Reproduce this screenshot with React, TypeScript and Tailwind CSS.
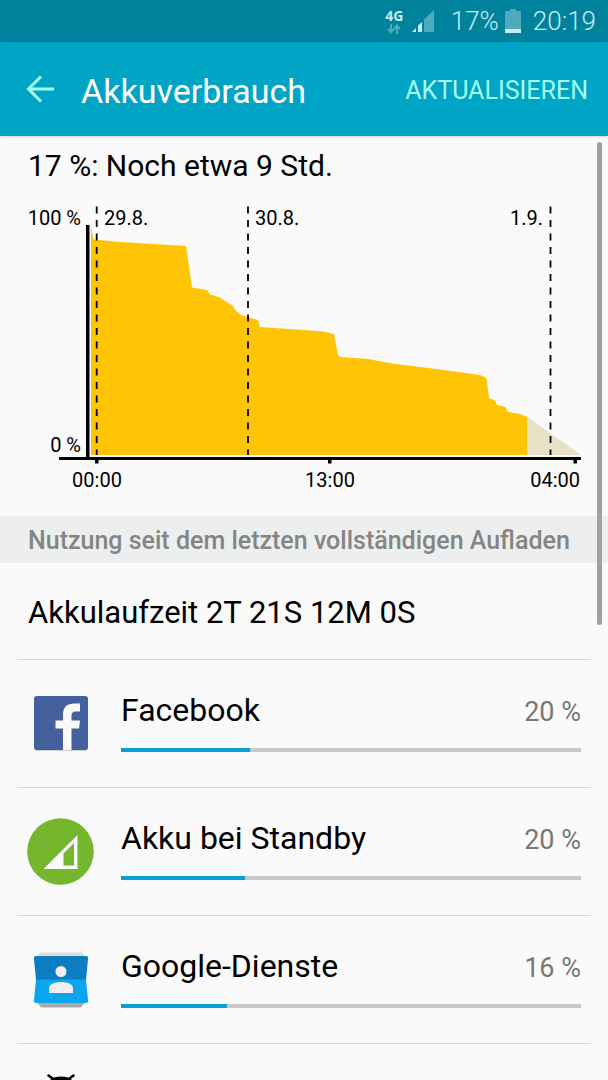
import type { ReactNode } from "react";

const dischargePath =
  "M91 227 L93.5 239.5 L100 240 L120 242 L186 246 L192 287.5 L207 290 L210 294.5 L220 297.5 L225 301 L233 306 L236 311 L242 315.5 L248 317 L258 320 L260 327 L304 330 L324 331.5 L334 334 L337 350 L338 355 L341 357 L368 359 L392 363.5 L440 369.5 L480 375 L486.5 378 L489 398 L495 400.5 L497 405 L505.5 407 L508 412 L520 414 L527.5 417 V455 H91 Z";

const FacebookIcon = () => (
  <svg width="56" height="58" viewBox="0 0 56 58" aria-hidden="true">
    <rect x="1" y="2" width="54" height="54" rx="3" fill="#d0d0d0" />
    <rect x="1" y="1" width="54" height="54" rx="3" fill="#44619d" />
    <path
      d="M30 55 V33.5 H22.5 V25.5 H30 V20 C30 12 34 8.5 41.5 8.5 H47 V16.5 H43 C39.5 16.5 38.5 18 38.5 21 V25.5 H47 L46 33.5 H38.5 V55 Z"
      fill="#fafafa"
    />
  </svg>
);

const StandbyIcon = () => (
  <svg width="67" height="67" viewBox="0 0 67 67" aria-hidden="true">
    <circle cx="33.5" cy="33.5" r="33.3" fill="#74b62e" />
    <path d="M50.5 17 V51 H16.5 Z M47 25 L36.5 35.5 V47.5 H47 Z" fill="#fafafa" fillRule="evenodd" />
  </svg>
);

const ContactsIcon = () => (
  <svg width="56" height="58" viewBox="0 0 56 58" aria-hidden="true">
    <path d="M7 1.5 H49 L53 7 H3 Z" fill="#dedede" />
    <path d="M3 50 H53 L48 56.5 H8 Z" fill="#ababab" />
    <path d="M3 5 H53 Q55.5 5 55 8 L53 29 H3 L1 8 Q.5 5 3 5 Z" fill="#0d7dc2" />
    <path d="M3 28.5 H53 L55 49 Q55.5 52 53 52 H3 Q.5 52 1 49 Z" fill="#0ca5f0" />
    <circle cx="28" cy="20.5" r="5.5" fill="#efefef" />
    <path d="M16 42 V37.5 C16 33 22 31 28 31 C34 31 40 33 40 37.5 V42 Z" fill="#efefef" />
  </svg>
);

const AndroidIcon = () => (
  <svg width="56" height="70" viewBox="0 0 56 70" aria-hidden="true">
    <path d="M15.5 2.5 L21 6.5 M40.5 2.5 L35 6.5" stroke="#000" strokeWidth="2.5" strokeLinecap="round" />
    <path d="M12 20 C12 9 18 3.5 28 3.5 C38 3.5 44 9 44 20 Z" />
    <rect x="12" y="22" width="32" height="30" rx="3" />
    <rect x="18" y="48" width="7" height="20" rx="3" />
    <rect x="31" y="48" width="7" height="20" rx="3" />
  </svg>
);

type Usage = { name: string; percent: string; bar: number; icon: ReactNode };

const usages: Usage[] = [
  { name: "Facebook", percent: "20 %", bar: 28, icon: <FacebookIcon /> },
  { name: "Akku bei Standby", percent: "20 %", bar: 27, icon: <StandbyIcon /> },
  { name: "Google-Dienste", percent: "16 %", bar: 23, icon: <ContactsIcon /> },
];

const StatusBar = () => (
  <div className="flex h-[42px] shrink-0 items-center justify-end bg-[#00829c] pr-3 text-[26px] font-light text-[#c8ebf1]">
    <div className="mr-2 flex w-[19px] flex-col items-center">
      <span className="font-['Open_Sans',sans-serif] text-sm leading-4 font-bold">4G</span>
      <svg width="14" height="10" viewBox="0 0 14 10" aria-hidden="true">
        <path
          d="M4 0 V8 M1 5 L4 8.5 L7 5 M10 10 V1.5 M7 5 L10 1.5 L13 5"
          stroke="#50aabd"
          strokeWidth="2"
          fill="none"
        />
      </svg>
    </div>
    <svg width="23" height="24" viewBox="0 0 23 24" className="mr-4" aria-hidden="true">
      <path d="M12 10.5 L22 1 V23 H12 Z" fill="#50aabd" />
      <path d="M6 16.5 L10 13 V23 H6 Z M0 23 L4 19 V23 Z" fill="#c8ebf1" />
    </svg>
    <span>17%</span>
    <svg width="16" height="24" viewBox="0 0 16 24" className="mr-3 ml-1.5" aria-hidden="true">
      <path d="M5 0 H11 V2 H16 V24 H0 V2 H5 Z" fill="#50aabd" />
      <rect y="20" width="16" height="4" fill="#c8ebf1" />
    </svg>
    <span>20:19</span>
  </div>
);

const BatteryChart = () => (
  <svg viewBox="0 196 608 304" className="block w-full" fontSize="20" role="img" aria-label="Akkuverlauf">
    <path d={dischargePath} fill="#ffc403" />
    <path d="M527.5 417 L581 455 H527.5 Z" fill="#e9e1c5" />
    {[96.7, 248, 550.5].map((x) => (
      <line key={x} x1={x} x2={x} y1="206.5" y2="455" stroke="#000" strokeWidth="1.8" strokeDasharray="7 6.5" />
    ))}
    <path d="M86 225 H89.5 V457 H581 V460 H59 V457 H86 Z" />
    <path d="M95 459 h3.5 v4.5 h-3.5 Z M328 459 h3.5 v4.5 h-3.5 Z M573.5 459 h3.5 v4.5 h-3.5 Z" />
    <text x="81" y="225" textAnchor="end">100 %</text>
    <text x="81" y="452" textAnchor="end">0 %</text>
    <text x="104" y="225">29.8.</text>
    <text x="255" y="225">30.8.</text>
    <text x="543" y="225" textAnchor="end">1.9.</text>
    <text x="97" y="487" textAnchor="middle">00:00</text>
    <text x="330" y="487" textAnchor="middle">13:00</text>
    <text x="580" y="487" textAnchor="end">04:00</text>
  </svg>
);

const UsageRow = ({ icon, children }: { icon: ReactNode; children?: ReactNode }) => (
  <li className="flex h-32 shrink-0 items-center gap-[27px] border-t border-[#d6d6d6] px-2.5">
    <div className="flex w-[67px] shrink-0 justify-center">{icon}</div>
    <div className="flex-1 pb-1.5">{children}</div>
  </li>
);

export default function App() {
  return (
    <div className="flex h-screen flex-col overflow-hidden bg-[#fafafa] font-[Roboto,sans-serif] text-black">
      <StatusBar />
      <header className="flex h-[94px] shrink-0 items-center bg-[#00a5c5] px-5 shadow-sm">
        <button type="button" aria-label="Zurück" className="p-1.5">
          <svg width="29" height="28" viewBox="0 0 29 28" fill="none" stroke="#a5fff5" strokeWidth="3">
            <path d="M28 14 H3 M15 1.5 L2.5 14 L15 26.5" />
          </svg>
        </button>
        <h1 className="ml-5 flex-1 pt-1 text-[34px] text-white">Akkuverbrauch</h1>
        <button type="button" className="pt-1 text-[25px] text-[#a5fff5]">
          AKTUALISIEREN
        </button>
      </header>

      <main className="relative min-h-0 flex-1 overflow-hidden">
        <p className="flex h-[60px] items-center px-7 pb-0.5 text-[30px]">17 %: Noch etwa 9 Std.</p>
        <BatteryChart />
        <h2 className="mt-4 flex h-[47px] items-center bg-[#edefee] px-7 pt-0.5 text-[25px] font-medium whitespace-nowrap text-[#858585]">
          Nutzung seit dem letzten vollständigen Aufladen
        </h2>
        <p className="flex h-24 items-center px-7 pt-1 text-[31px]">Akkulaufzeit 2T 21S 12M 0S</p>
        <ul className="flex flex-col px-[17px]">
          {usages.map(({ name, percent, bar, icon }) => (
            <UsageRow key={name} icon={icon}>
              <div className="flex items-center justify-between leading-9">
                <span className="text-[32px]">{name}</span>
                <span className="pt-1 text-[27px] text-[#777777]">{percent}</span>
              </div>
              <div className="mt-[18px] h-1 bg-[#c8c8c8]">
                <div className="h-full bg-[#0a9fd2]" style={{ width: `${bar}%` }} />
              </div>
            </UsageRow>
          ))}
          <UsageRow icon={<AndroidIcon />} />
        </ul>
        {/* Scroll thumb */}
        <div className="absolute top-1.5 right-1.5 h-[483px] w-[5px] rounded-full bg-[#a1a1a1]" />
      </main>
    </div>
  );
}
